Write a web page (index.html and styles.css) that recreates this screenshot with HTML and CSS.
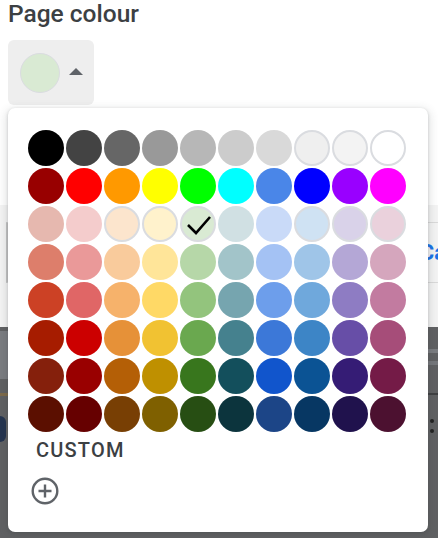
FILE: index.html
```html
<!DOCTYPE html>
<html>
<head>
<meta charset="utf-8">
<link rel="stylesheet" href="styles.css">
</head>
<body>
<header class="head">
  <h1 class="title">Page colour</h1>
  <button class="colour-btn" type="button">
    <span class="swatch"></span>
    <span class="caret"></span>
  </button>
</header>

<section class="band">
  <div class="field">
    <span class="field-action">Ca</span>
  </div>
</section>

<section class="dim">
  <div class="dim-left">
    <span class="blot blot-a"></span>
    <span class="blot blot-b"></span>
    <span class="blot blot-c"></span>
  </div>
  <div class="dim-right">
    <span class="blot blot-d"></span>
    <span class="blot blot-e"></span>
    <span class="blot blot-f"></span>
    <span class="dot"></span>
    <span class="dot"></span>
  </div>
</section>

<div class="popup">
  <div class="grid">
    <span class="c" style="background:#000000"></span>
    <span class="c" style="background:#434343"></span>
    <span class="c" style="background:#666666"></span>
    <span class="c" style="background:#999999"></span>
    <span class="c" style="background:#b7b7b7"></span>
    <span class="c" style="background:#cccccc"></span>
    <span class="c" style="background:#d9d9d9"></span>
    <span class="c ring" style="background:#efefef"></span>
    <span class="c ring" style="background:#f3f3f3"></span>
    <span class="c ring" style="background:#ffffff"></span>

    <span class="c" style="background:#980000"></span>
    <span class="c" style="background:#ff0000"></span>
    <span class="c" style="background:#ff9900"></span>
    <span class="c" style="background:#ffff00"></span>
    <span class="c" style="background:#00ff00"></span>
    <span class="c" style="background:#00ffff"></span>
    <span class="c" style="background:#4a86e8"></span>
    <span class="c" style="background:#0000ff"></span>
    <span class="c" style="background:#9900ff"></span>
    <span class="c" style="background:#ff00ff"></span>

    <span class="c" style="background:#e6b8af"></span>
    <span class="c" style="background:#f4cccc"></span>
    <span class="c ring" style="background:#fce5cd"></span>
    <span class="c ring" style="background:#fff2cc"></span>
    <span class="c ring sel" style="background:#d9ead3"><svg class="check" viewBox="0 0 36 36"><path d="M8 19 L16 27 L30 11" fill="none" stroke="#000" stroke-width="2.6"/></svg></span>
    <span class="c" style="background:#d0e0e3"></span>
    <span class="c" style="background:#c9daf8"></span>
    <span class="c ring" style="background:#cfe2f3"></span>
    <span class="c ring" style="background:#d9d2e9"></span>
    <span class="c ring" style="background:#ead1dc"></span>

    <span class="c" style="background:#dd7e6b"></span>
    <span class="c" style="background:#ea9999"></span>
    <span class="c" style="background:#f9cb9c"></span>
    <span class="c" style="background:#ffe599"></span>
    <span class="c" style="background:#b6d7a8"></span>
    <span class="c" style="background:#a2c4c9"></span>
    <span class="c" style="background:#a4c2f4"></span>
    <span class="c" style="background:#9fc5e8"></span>
    <span class="c" style="background:#b4a7d6"></span>
    <span class="c" style="background:#d5a6bd"></span>

    <span class="c" style="background:#cc4125"></span>
    <span class="c" style="background:#e06666"></span>
    <span class="c" style="background:#f6b26b"></span>
    <span class="c" style="background:#ffd966"></span>
    <span class="c" style="background:#93c47d"></span>
    <span class="c" style="background:#76a5af"></span>
    <span class="c" style="background:#6d9eeb"></span>
    <span class="c" style="background:#6fa8dc"></span>
    <span class="c" style="background:#8e7cc3"></span>
    <span class="c" style="background:#c27ba0"></span>

    <span class="c" style="background:#a61c00"></span>
    <span class="c" style="background:#cc0000"></span>
    <span class="c" style="background:#e69138"></span>
    <span class="c" style="background:#f1c232"></span>
    <span class="c" style="background:#6aa84f"></span>
    <span class="c" style="background:#45818e"></span>
    <span class="c" style="background:#3c78d8"></span>
    <span class="c" style="background:#3d85c6"></span>
    <span class="c" style="background:#674ea7"></span>
    <span class="c" style="background:#a64d79"></span>

    <span class="c" style="background:#85200c"></span>
    <span class="c" style="background:#990000"></span>
    <span class="c" style="background:#b45f06"></span>
    <span class="c" style="background:#bf9000"></span>
    <span class="c" style="background:#38761d"></span>
    <span class="c" style="background:#134f5c"></span>
    <span class="c" style="background:#1155cc"></span>
    <span class="c" style="background:#0b5394"></span>
    <span class="c" style="background:#351c75"></span>
    <span class="c" style="background:#741b47"></span>

    <span class="c" style="background:#5b0f00"></span>
    <span class="c" style="background:#660000"></span>
    <span class="c" style="background:#783f04"></span>
    <span class="c" style="background:#7f6000"></span>
    <span class="c" style="background:#274e13"></span>
    <span class="c" style="background:#0c343d"></span>
    <span class="c" style="background:#1c4587"></span>
    <span class="c" style="background:#073763"></span>
    <span class="c" style="background:#20124d"></span>
    <span class="c" style="background:#4c1130"></span>
  </div>
  <div class="custom">CUSTOM</div>
  <svg class="add" viewBox="0 0 28 28" width="28" height="28">
    <circle cx="14" cy="14" r="12.3" fill="none" stroke="#5f6368" stroke-width="2.4"/>
    <path d="M14 7.5 V20.5 M7.5 14 H20.5" stroke="#5f6368" stroke-width="2.4" fill="none"/>
  </svg>
</div>
</body>
</html>
```

FILE: styles.css
```css
html, body {
  margin: 0;
  padding: 0;
}
body {
  width: 438px;
  height: 538px;
  overflow: hidden;
  position: relative;
  background: #ffffff;
  font-family: Roboto, "Liberation Sans", sans-serif;
}

.head {
  padding: 0 8px;
  height: 205px;
}
.title {
  margin: 0;
  font-size: 24.5px;
  line-height: 27px;
  font-weight: 500;
  color: #3c4043;
}
.colour-btn {
  margin-top: 13px;
  width: 86px;
  height: 65px;
  border: 0;
  border-radius: 6px;
  background: #eeeeee;
  padding: 0 0 0 12px;
  display: flex;
  align-items: center;
}
.swatch {
  width: 40px;
  height: 40px;
  box-sizing: border-box;
  border-radius: 50%;
  background: #d9ead3;
  border: 1.5px solid #dadce0;
}
.caret {
  margin-left: 9px;
  width: 0;
  height: 0;
  border-left: 7px solid transparent;
  border-right: 7px solid transparent;
  border-bottom: 7px solid #5f6368;
  margin-top: -2px;
}

.band {
  height: 122px;
  background: #f4f4f4;
  padding-top: 17px;
  box-sizing: border-box;
}
.field {
  margin-left: 6px;
  height: 61px;
  box-sizing: border-box;
  border: 1px solid #dadada;
  border-left: 2px solid #c4c4c4;
  border-right: 0;
  display: flex;
  justify-content: flex-end;
  align-items: center;
  overflow: hidden;
}
.field-action {
  color: #1a73e8;
  font-weight: 700;
  font-size: 22px;
  margin-right: -8px;
}

.dim {
  height: 211px;
  background: #606163;
  display: flex;
  justify-content: space-between;
}
.dim-left, .dim-right {
  width: 10px;
  display: flex;
  flex-direction: column;
}
.blot { display: block; }
.blot-a { height: 48px; margin-top: 4px; background: #7a7c80; }
.blot-b { height: 3px; margin-top: 14px; background: #7d6a4a; }
.blot-c { height: 26px; margin-top: 20px; width: 6px; background: #24344f; border-radius: 0 6px 6px 0; }
.blot-d { height: 4px; margin-top: 22px; background: #7a7c80; }
.blot-e { height: 4px; margin-top: 8px; background: #75777b; }
.blot-f { height: 2px; margin-top: 28px; background: #3f4042; }
.dot { width: 4px; height: 4px; border-radius: 50%; background: #222; margin: 24px 0 0 2px; }
.dot + .dot { margin-top: 6px; }

.popup {
  position: absolute;
  left: 8px;
  top: 108px;
  width: 420px;
  height: 424px;
  box-sizing: border-box;
  background: #ffffff;
  border-radius: 7px;
  box-shadow: 0 1px 3px rgba(60, 64, 67, 0.25), 0 3px 9px 3px rgba(60, 64, 67, 0.12);
  padding: 22px 22px 0 20px;
}
.grid {
  display: grid;
  grid-template-columns: repeat(10, 36px);
  grid-auto-rows: 36px;
  gap: 2px;
}
.c {
  width: 36px;
  height: 36px;
  box-sizing: border-box;
  border-radius: 50%;
  display: block;
  position: relative;
}
.ring {
  border: 2px solid #dadce0;
}
.sel .check {
  position: absolute;
  left: -2px;
  top: -2px;
  width: 36px;
  height: 36px;
}
.custom {
  margin: 6px 0 0 8px;
  font-size: 20px;
  line-height: 24px;
  font-weight: 500;
  letter-spacing: 1.2px;
  color: #3c4043;
}
.add {
  display: block;
  margin: 15px 0 0 3px;
}
```
